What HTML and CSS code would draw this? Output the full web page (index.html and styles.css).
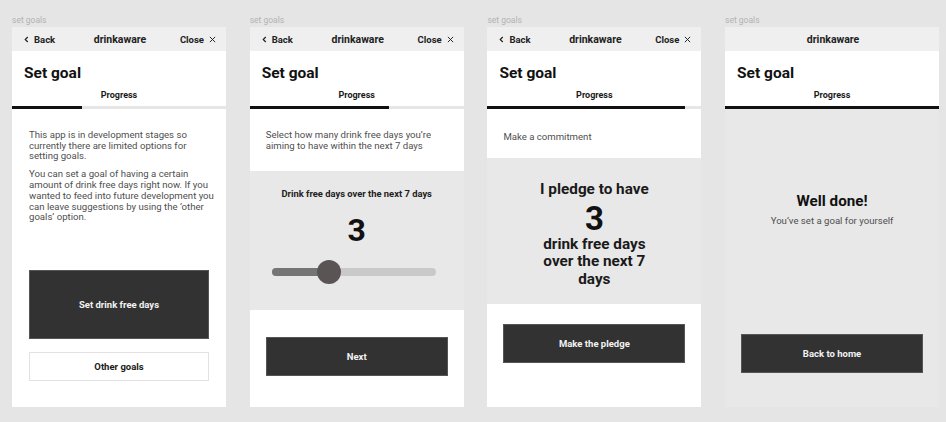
FILE: index.html
```html
<!DOCTYPE html>
<html lang="en">
<head>
<meta charset="utf-8">
<title>set goals</title>
<link rel="stylesheet" href="styles.css">
</head>
<body>
<div class="board">

  <section class="artboard">
    <div class="label">set goals</div>
    <div class="phone">
      <header class="topbar">
        <span class="back"><svg class="chev" viewBox="0 0 6 8" width="5" height="7"><path d="M4.5 1 L1.5 4 L4.5 7" fill="none" stroke="#222" stroke-width="1.4"/></svg>Back</span>
        <span class="brand">drinkaware</span>
        <span class="close">Close<svg class="x" viewBox="0 0 8 8" width="7" height="7"><path d="M1 1 L7 7 M7 1 L1 7" stroke="#222" stroke-width="1.1"/></svg></span>
      </header>
      <div class="titlearea">
        <h1 class="title">Set goal</h1>
        <div class="tab">Progress</div>
      </div>
      <div class="track"><div class="fill fill-1"></div></div>
      <div class="body body-white intro">
        <p class="copy">This app is in development stages so currently there are limited options for setting goals.</p>
        <p class="copy">You can set a goal of having a certain amount of drink free days right now. If you wanted to feed into future development you can leave suggestions by using the ‘other goals’ option.</p>
        <div class="actions">
          <div class="btn btn-dark btn-tall">Set drink free days</div>
          <div class="btn btn-light">Other goals</div>
        </div>
      </div>
    </div>
  </section>

  <section class="artboard">
    <div class="label">set goals</div>
    <div class="phone">
      <header class="topbar">
        <span class="back"><svg class="chev" viewBox="0 0 6 8" width="5" height="7"><path d="M4.5 1 L1.5 4 L4.5 7" fill="none" stroke="#222" stroke-width="1.4"/></svg>Back</span>
        <span class="brand">drinkaware</span>
        <span class="close">Close<svg class="x" viewBox="0 0 8 8" width="7" height="7"><path d="M1 1 L7 7 M7 1 L1 7" stroke="#222" stroke-width="1.1"/></svg></span>
      </header>
      <div class="titlearea">
        <h1 class="title">Set goal</h1>
        <div class="tab">Progress</div>
      </div>
      <div class="track"><div class="fill fill-2"></div></div>
      <div class="lead lead-2">
        <p class="copy">Select how many drink free days you’re aiming to have within the next 7 days</p>
      </div>
      <div class="grey grey-2">
        <div class="slabel">Drink free days over the next 7 days</div>
        <div class="bignum">3</div>
        <div class="slider">
          <div class="slider-on"></div>
          <div class="thumb"></div>
        </div>
      </div>
      <div class="foot foot-2">
        <div class="btn btn-dark">Next</div>
      </div>
    </div>
  </section>

  <section class="artboard">
    <div class="label">set goals</div>
    <div class="phone">
      <header class="topbar">
        <span class="back"><svg class="chev" viewBox="0 0 6 8" width="5" height="7"><path d="M4.5 1 L1.5 4 L4.5 7" fill="none" stroke="#222" stroke-width="1.4"/></svg>Back</span>
        <span class="brand">drinkaware</span>
        <span class="close">Close<svg class="x" viewBox="0 0 8 8" width="7" height="7"><path d="M1 1 L7 7 M7 1 L1 7" stroke="#222" stroke-width="1.1"/></svg></span>
      </header>
      <div class="titlearea">
        <h1 class="title">Set goal</h1>
        <div class="tab">Progress</div>
      </div>
      <div class="track"><div class="fill fill-3"></div></div>
      <div class="lead lead-3">
        <p class="copy">Make a commitment</p>
      </div>
      <div class="grey grey-3">
        <div class="pledge">I pledge to have</div>
        <div class="bignum bignum-3">3</div>
        <div class="pledge pledge-lines">drink free days<br>over the next 7<br>days</div>
      </div>
      <div class="foot foot-3">
        <div class="btn btn-dark">Make the pledge</div>
      </div>
    </div>
  </section>

  <section class="artboard">
    <div class="label">set goals</div>
    <div class="phone">
      <header class="topbar topbar-center">
        <span class="brand">drinkaware</span>
      </header>
      <div class="titlearea">
        <h1 class="title">Set goal</h1>
        <div class="tab">Progress</div>
      </div>
      <div class="track"><div class="fill fill-4"></div></div>
      <div class="grey grey-4">
        <div class="done">Well done!</div>
        <p class="copy copy-center">You’ve set a goal for yourself</p>
        <div class="btn btn-dark btn-home">Back to home</div>
      </div>
    </div>
  </section>

</div>
</body>
</html>
```
FILE: styles.css
```css
* { box-sizing: border-box; }

html, body {
  margin: 0;
  padding: 0;
}

body {
  background: #e5e5e5;
  font-family: Roboto, "Liberation Sans", Arial, sans-serif;
  color: #1a1a1a;
  width: 946px;
  height: 422px;
  overflow: hidden;
}

.board {
  display: flex;
  gap: 23.7px;
  padding: 13px 0 0 12px;
}

.artboard {
  width: 214px;
  display: flex;
  flex-direction: column;
}

.label {
  font-size: 8.5px;
  line-height: 14px;
  color: #b3b3b3;
  height: 14px;
}

.phone {
  height: 380px;
  display: flex;
  flex-direction: column;
  background: #ffffff;
}

.topbar {
  height: 24px;
  background: #efefef;
  display: grid;
  grid-template-columns: 1fr auto 1fr;
  align-items: center;
  padding: 0 10px 0 12px;
  font-size: 9.5px;
  font-weight: 700;
  color: #222;
}

.topbar-center {
  grid-template-columns: 1fr;
  justify-items: center;
}

.back {
  display: flex;
  align-items: center;
  gap: 5px;
}

.brand {
  font-size: 10.5px;
  font-weight: 700;
}

.close {
  justify-self: end;
  display: flex;
  align-items: center;
  gap: 5px;
  padding-top: 1px;
}

.titlearea {
  height: 55px;
  padding: 13px 12px 0;
  background: #fff;
}

.title {
  margin: 0;
  font-size: 15.5px;
  line-height: 19px;
  font-weight: 700;
  color: #111;
}

.tab {
  margin-top: 7px;
  text-align: center;
  font-size: 9px;
  line-height: 11px;
  font-weight: 700;
  color: #1a1a1a;
}

.track {
  height: 3px;
  background: #e6e6e6;
}

.fill {
  height: 3px;
  background: #111;
}
.fill-1 { width: 32.5%; }
.fill-2 { width: 65%; }
.fill-3 { width: 92.5%; }
.fill-4 { width: 100%; }

.copy {
  margin: 0;
  font-size: 9.6px;
  line-height: 10.7px;
  color: #4f4f4f;
  font-weight: 400;
}

.body {
  flex: 1;
  display: flex;
  flex-direction: column;
}

.intro {
  padding: 21px 11px 26px 17px;
}

.intro .copy + .copy {
  margin-top: 7.3px;
}

.actions {
  margin-top: auto;
  margin-right: 6px;
  display: flex;
  flex-direction: column;
  gap: 13px;
}

.btn {
  display: flex;
  align-items: center;
  justify-content: center;
  font-size: 9.5px;
  font-weight: 700;
  height: 39px;
}

.btn-dark {
  background: #323232;
  color: #f2f2f2;
  border: 1px solid #555;
}

.btn-tall {
  height: 69px;
}

.btn-light {
  height: 29px;
  background: #fff;
  border: 1px solid #e2e2e2;
  color: #1a1a1a;
}

.lead {
  padding: 0 16px;
  display: flex;
  flex-direction: column;
  justify-content: center;
  background: #fff;
}
.lead-2 { height: 62px; padding-top: 2px; }
.lead-3 { height: 49px; padding-top: 7px; }

.grey {
  background: #e8e8e8;
  display: flex;
  flex-direction: column;
  align-items: center;
}

.grey-2 {
  height: 139px;
  padding-top: 16.5px;
}

.slabel {
  font-size: 9.4px;
  line-height: 11px;
  font-weight: 700;
  color: #222;
}

.bignum {
  margin-top: 15px;
  font-size: 32px;
  line-height: 32px;
  font-weight: 700;
  color: #111;
}

.slider {
  position: relative;
  margin-top: 22px;
  margin-right: 6px;
  width: 164px;
  height: 8px;
  border-radius: 4px;
  background: #c9c9c9;
}

.slider-on {
  width: 57px;
  height: 8px;
  border-radius: 4px 0 0 4px;
  background: #757575;
}

.thumb {
  position: absolute;
  left: 45px;
  top: -8px;
  width: 24px;
  height: 24px;
  border-radius: 50%;
  background: #5a5455;
}

.foot {
  flex: 1;
  background: #fff;
  padding: 0 16px;
}
.foot-2 { padding-top: 27px; }
.foot-3 { padding-top: 20px; }

.grey-3 {
  height: 146px;
  padding-top: 23px;
}

.pledge {
  font-size: 15.3px;
  line-height: 17.5px;
  font-weight: 700;
  color: #1a1a1a;
  text-align: center;
}

.bignum-3 {
  margin-top: 4px;
  font-size: 33px;
  line-height: 32px;
}

.pledge-lines {
  margin-top: 1px;
}

.grey-4 {
  flex: 1;
  padding: 83px 16px 34px;
  align-items: stretch;
}

.done {
  text-align: center;
  font-size: 15.2px;
  line-height: 18px;
  font-weight: 700;
  color: #111;
}

.copy-center {
  text-align: center;
  margin-top: 6px;
}

.btn-home {
  margin-top: auto;
}
```
